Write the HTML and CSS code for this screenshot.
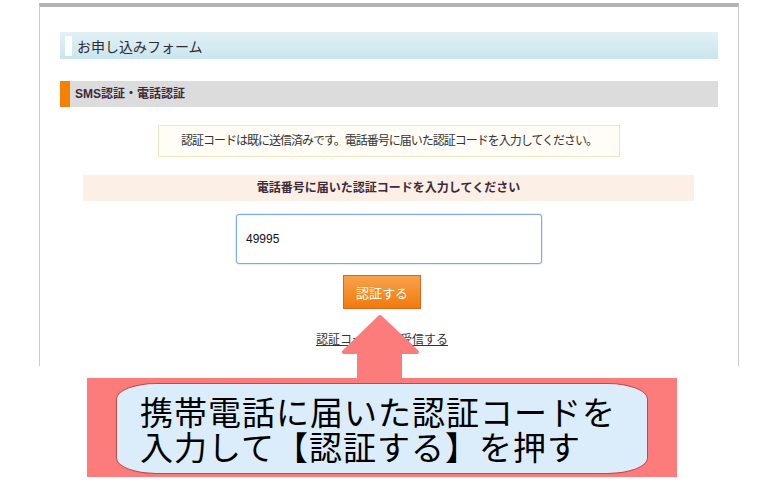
FILE: index.html
```html
<!DOCTYPE html>
<html lang="ja">
<head>
    <meta charset="UTF-8">
    <meta name="viewport" content="width=device-width, initial-scale=1.0">
    <title>SMS認証・電話認証</title>
    <link rel="stylesheet" href="styles.css">
</head>
<body>
    <div class="page">
        <div class="form-wrap">
            <h2 class="form-title"><span class="title-mark"></span>お申し込みフォーム</h2>
            <h3 class="section-title">SMS認証・電話認証</h3>
            <p class="notice">認証コードは既に送信済みです。電話番号に届いた認証コードを入力してください。</p>
            <div class="code-label">電話番号に届いた認証コードを入力してください</div>
            <div class="code-field">
                <input type="text" class="code-input" value="49995">
            </div>
            <div class="submit-row">
                <button class="submit-button">認証する</button>
            </div>
            <div class="resend-row">
                <a href="#" class="resend-link">認証コードを再受信する</a>
            </div>
        </div>

        <svg class="arrow" width="82" height="66" viewBox="0 0 82 66">
            <polygon points="40,5 4,40 19,40 19,66 60,66 60,40 77,40" fill="#fc7b7b" stroke="#fc7b7b" stroke-width="4" stroke-linejoin="round"/>
        </svg>

        <div class="callout">
            <div class="callout-inner">携帯電話に届いた認証コードを<br>入力して【認証する】を押す</div>
        </div>
    </div>
</body>
</html>
```

FILE: styles.css
```css
body {
    margin: 0;
    background-color: #fff;
    color: #333;
    font-family: "Liberation Sans", "Noto Sans CJK JP", sans-serif;
    font-size: 12px;
}
.page {
    position: relative;
    height: 496px;
    overflow: hidden;
}
.form-wrap {
    box-sizing: border-box;
    width: 700px;
    height: 363px;
    margin: 3px 0 0 39px;
    padding: 25px 20px 0 20px;
    border-top: 4px solid #b3b3b3;
    border-left: 1px solid #cacaca;
    border-right: 1px solid #cacaca;
}
.form-title {
    display: flex;
    align-items: center;
    height: 27px;
    margin: 0;
    padding-left: 5px;
    background: linear-gradient(#e1f1f5, #c9e6ee);
    font-size: 14px;
    font-weight: normal;
    color: #302a36;
}
.title-mark {
    width: 7px;
    height: 20px;
    margin-right: 5px;
    background-color: #fff;
}
.section-title {
    height: 26px;
    margin: 22px 0 0 0;
    padding-left: 5px;
    border-left: 10px solid #f68000;
    background-color: #dcdcdc;
    font-size: 12px;
    line-height: 26px;
    color: #3a2a3a;
}
.notice {
    box-sizing: border-box;
    width: 462px;
    height: 32px;
    margin: 18px auto 0 auto;
    border: 1px solid #efe5c2;
    background-color: #fffdf5;
    text-align: center;
    font-size: 12px;
    letter-spacing: -1px;
    line-height: 30px;
    color: #333;
}
.code-label {
    height: 26px;
    margin: 18px 24px 0 23px;
    background-color: #fcefe6;
    text-align: center;
    font-weight: bold;
    line-height: 26px;
    color: #3a2a3a;
}
.code-field {
    display: flex;
    justify-content: center;
    margin-top: 13px;
}
.code-input {
    box-sizing: border-box;
    width: 306px;
    height: 50px;
    padding: 0 9px;
    border: 1px solid #7fa8e6;
    border-radius: 3px;
    box-shadow: 0 0 2px #9cc0f0;
    font-family: "Liberation Sans", sans-serif;
    font-size: 12px;
    color: #111;
    outline: none;
}
.submit-row {
    display: flex;
    justify-content: center;
    margin-top: 11px;
    padding-right: 14px;
}
.submit-button {
    width: 78px;
    height: 34px;
    padding: 0;
    border: 1px solid #d9691c;
    background: linear-gradient(#f8a24c, #f27a0c);
    color: #fff;
    font-family: "Liberation Sans", "Noto Sans CJK JP", sans-serif;
    font-size: 13px;
    cursor: pointer;
}
.resend-row {
    margin-top: 21px;
    padding-right: 14px;
    text-align: center;
}
.resend-link {
    color: #333;
    font-size: 12px;
    text-decoration: underline;
}
.arrow {
    position: absolute;
    left: 340px;
    top: 312px;
}
.callout {
    position: absolute;
    left: 87px;
    top: 378px;
    width: 590px;
    height: 99px;
    box-sizing: border-box;
    padding: 5px 29px 3px 29px;
    background-color: #fc7b7b;
}
.callout-inner {
    box-sizing: border-box;
    height: 91px;
    padding: 10px 0 0 23px;
    border: 1px solid #c44848;
    border-radius: 40px / 16px;
    background-color: #dbedfb;
    font-family: "Noto Sans CJK JP", sans-serif;
    font-size: 33px;
    letter-spacing: 1px;
    line-height: 35px;
    color: #000;
}
```
